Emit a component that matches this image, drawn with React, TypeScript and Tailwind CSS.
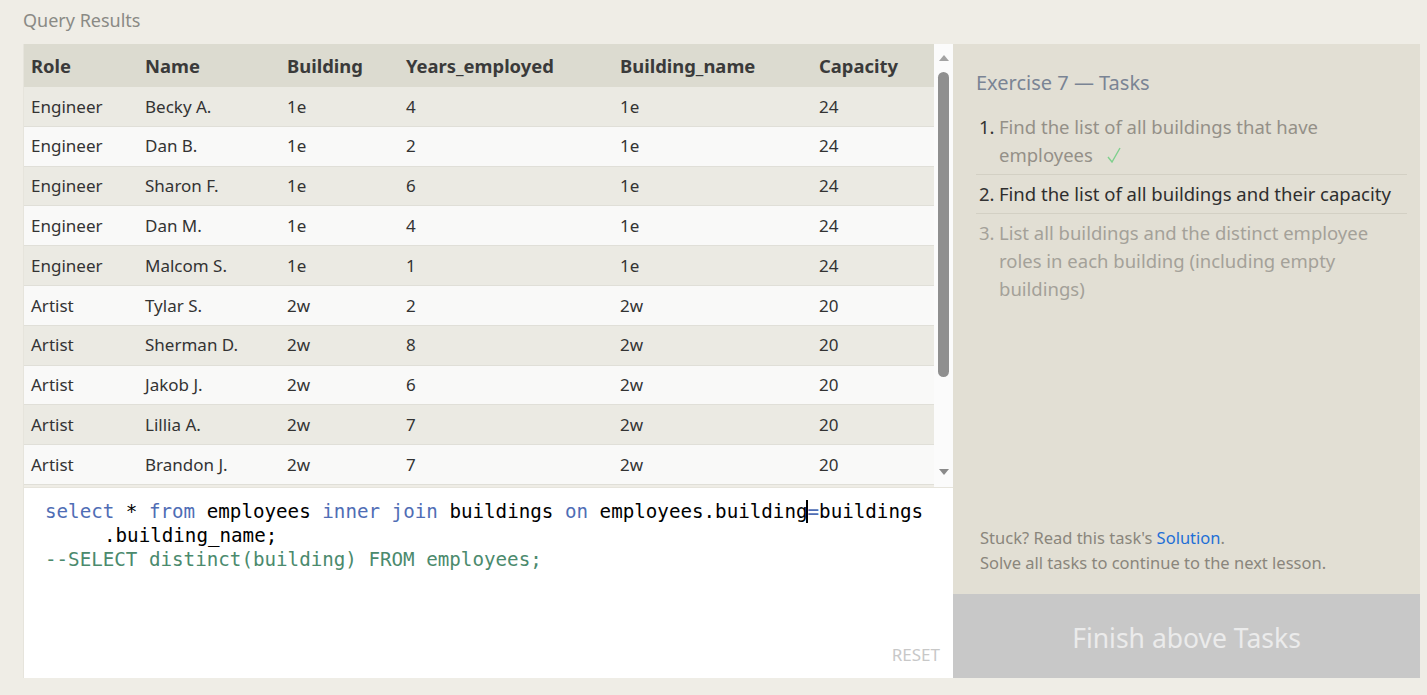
import React from "react";

const rows: string[][] = [
  ["Engineer", "Becky A.", "1e", "4", "1e", "24"],
  ["Engineer", "Dan B.", "1e", "2", "1e", "24"],
  ["Engineer", "Sharon F.", "1e", "6", "1e", "24"],
  ["Engineer", "Dan M.", "1e", "4", "1e", "24"],
  ["Engineer", "Malcom S.", "1e", "1", "1e", "24"],
  ["Artist", "Tylar S.", "2w", "2", "2w", "20"],
  ["Artist", "Sherman D.", "2w", "8", "2w", "20"],
  ["Artist", "Jakob J.", "2w", "6", "2w", "20"],
  ["Artist", "Lillia A.", "2w", "7", "2w", "20"],
  ["Artist", "Brandon J.", "2w", "7", "2w", "20"],
];

const headers = ["Role", "Name", "Building", "Years_employed", "Building_name", "Capacity"];
const widths = ["w-[114px]", "w-[142px]", "w-[119px]", "w-[214px]", "w-[199px]", "w-[110px]"];

export default function App() {
  return (
    <div
      className="w-[1427px] h-[695px] bg-[#efede6] flex flex-col overflow-hidden"
      style={{ fontFamily: '"Noto Sans", "Open Sans", sans-serif' }}
    >
      <div className="h-[44px] pl-[23px] pt-[6px] text-[18px] text-[#8a8a85] leading-[28px]">
        Query Results
      </div>
      <div className="flex h-[634px]">
        {/* Left panel */}
        <div className="w-[930px] ml-[23px] flex flex-col border-l border-[#e6e4dc]">
          <div className="h-[443px] flex">
            <div className="w-[911px] flex flex-col">
              <div className="h-[43px] shrink-0 bg-[#dcdbd0] flex items-center pl-[7px] pt-[1px] font-bold text-[18.4px] text-[#3a3a3a]">
                {headers.map((h, i) => (
                  <div key={h} className={widths[i]}>
                    {h}
                  </div>
                ))}
              </div>
              {rows.map((r, ri) => (
                <div
                  key={ri}
                  className={`h-[39.8px] shrink-0 flex items-center pl-[7px] text-[17px] text-[#333] border-b border-[#e0dfd8] ${
                    ri % 2 === 0 ? "bg-[#ebeae3]" : "bg-[#f9f9f8]"
                  }`}
                >
                  {r.map((c, i) => (
                    <div key={i} className={widths[i]}>
                      {c}
                    </div>
                  ))}
                </div>
              ))}
            </div>
            {/* Scrollbar */}
            <div className="w-[19px] bg-[#fbfbfb] flex flex-col items-center">
              <svg width="10" height="6" viewBox="0 0 10 6" className="mt-[11px]">
                <polygon points="5,0 10,6 0,6" fill="#a3a3a3" />
              </svg>
              <div className="mt-[11px] w-[11px] h-[305px] rounded-full bg-[#8f8f8f]" />
              <div className="flex-1" />
              <svg width="10" height="6" viewBox="0 0 10 6" className="mb-[12px]">
                <polygon points="0,0 10,0 5,6" fill="#8a8a8a" />
              </svg>
            </div>
          </div>
          {/* Editor */}
          <div className="h-[191px] bg-white border-t border-[#e6e4dc] relative">
            <div
              className="pt-[12px] pl-[21px] text-[19.2px] leading-[24px] text-black whitespace-pre"
              style={{ fontFamily: '"DejaVu Sans Mono", "Liberation Mono", monospace' }}
            >
              <div>
                <span className="text-[#4f6db5]">select</span> * <span className="text-[#4f6db5]">from</span> employees{" "}
                <span className="text-[#4f6db5]">inner</span> <span className="text-[#4f6db5]">join</span> buildings{" "}
                <span className="text-[#4f6db5]">on</span> employees.building
                <span className="border-l-2 border-black -ml-[2px]" />
                <span className="text-[#4f6db5]">=</span>buildings
              </div>
              <div className="pl-[59px]">.building_name;</div>
              <div className="text-[#4b8a6d]">--SELECT distinct(building) FROM employees;</div>
            </div>
            <div className="absolute right-[13px] bottom-[11px] text-[17px] text-[#c8c8c8]">RESET</div>
          </div>
        </div>
        {/* Right panel */}
        <div className="w-[467px] bg-[#e2dfd4] flex flex-col">
          <div className="flex-1 pl-[23px] pr-[13px] pt-[26px]">
            <div className="text-[20px] text-[#7a8494] leading-[26px]">Exercise 7 — Tasks</div>
            <ol className="mt-[17px] text-[18.5px] leading-[28px]">
              <li className="flex pb-[5px] border-b border-[#d3d0c4]">
                <span className="w-[23px] pl-[3px] text-[#333]">1.</span>
                <span className="flex-1 text-[#949088] pr-[10px]">
                  Find the list of all buildings that have employees
                  <svg width="14" height="16" viewBox="0 0 14 16" className="inline-block ml-[14px] -mt-[4px] align-middle">
                    <polyline points="1,10 5,15 13,1" fill="none" stroke="#7fd08d" strokeWidth="1.4" />
                  </svg>
                </span>
              </li>
              <li className="flex pt-[5px] pb-[5px] border-b border-[#d3d0c4]">
                <span className="w-[23px] pl-[3px] text-[#333]">2.</span>
                <span className="flex-1 text-[#2e2e2e]">Find the list of all buildings and their capacity</span>
              </li>
              <li className="flex pt-[5px]">
                <span className="w-[23px] pl-[3px] text-[#a4a199]">3.</span>
                <span className="flex-1 text-[#a4a199] pr-[10px]">
                  List all buildings and the distinct employee roles in each building (including empty buildings)
                </span>
              </li>
            </ol>
          </div>
          <div className="px-[27px] pb-[19px] text-[16.5px] leading-[25px] text-[#8a867c]">
            <div>
              Stuck? Read this task's <span className="text-[#1f6fd6]">Solution</span>.
            </div>
            <div>Solve all tasks to continue to the next lesson.</div>
          </div>
          <div className="h-[84px] bg-[#c8c8c8] flex items-center justify-center pt-[5px] text-[26.5px] text-[#ebebeb]">
            Finish above Tasks
          </div>
        </div>
      </div>
    </div>
  );
}
